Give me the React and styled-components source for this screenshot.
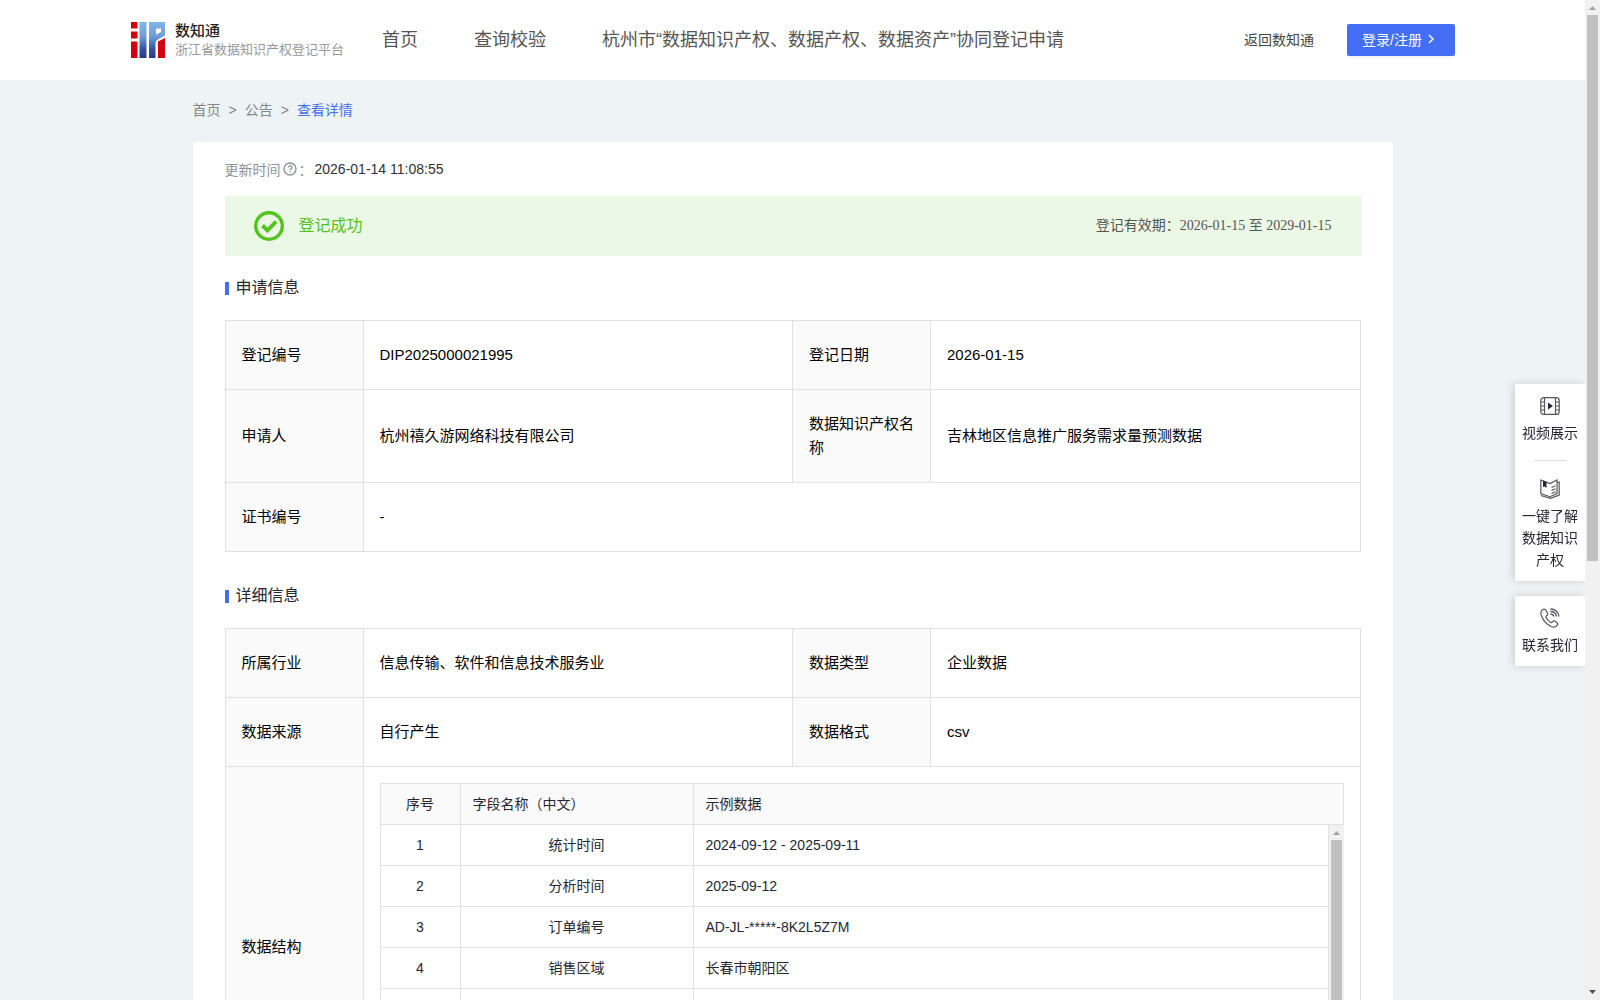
import React from "react";
import styled, { createGlobalStyle } from "styled-components";

const sans = `"Liberation Sans", "Noto Sans CJK SC", sans-serif`;
const serif = `"Liberation Serif", "Noto Sans CJK SC", serif`;

const GlobalStyle = createGlobalStyle`
  * {
    box-sizing: border-box;
  }
  body {
    margin: 0;
    overflow: hidden;
    background: #eef3f6;
    color: #262632;
    font-family: ${sans};
    font-size: 14px;
  }
  a {
    color: inherit;
    text-decoration: none;
  }
  button {
    font-family: inherit;
    cursor: pointer;
  }
`;

const navLinks = ["首页", "查询校验", "杭州市“数据知识产权、数据产权、数据资产”协同登记申请"];

const fields = [
  ["统计时间", "2024-09-12 - 2025-09-11"],
  ["分析时间", "2025-09-12"],
  ["订单编号", "AD-JL-*****-8K2L5Z7M"],
  ["销售区域", "长春市朝阳区"],
  ["", ""],
  ["", ""],
  ["", ""],
];

const Logo = () => (
  <svg width="34" height="36" viewBox="0 0 34 36" aria-hidden="true">
    <defs>
      <linearGradient id="blue" x1="0" y1="0" x2="0" y2="36" gradientUnits="userSpaceOnUse">
        <stop offset="0" stopColor="#7fb6ea" />
        <stop offset="0.4" stopColor="#6f9fd8" />
        <stop offset="0.75" stopColor="#3552a0" />
        <stop offset="1" stopColor="#283a86" />
      </linearGradient>
    </defs>
    <path fill="#d7000f" d="M0 0h6.500v6.500H0zM0 9.500h6.500v7H0zM0 19.500h6.500V36H0zM27 19.500l7-3.500v20h-7z" />
    <path fill="url(#blue)" d="M8.500 0h7v36h-7zM18 0h16v13.500l-8 4.500-1.500 2V36H18zM25 6.500v6l5-2.500V6.500z" fillRule="evenodd" />
  </svg>
);

const CheckIcon = () => (
  <svg width="30" height="30" viewBox="0 0 30 30" fill="none" stroke="#52c41a" aria-hidden="true">
    <circle cx="15" cy="15" r="13.300" strokeWidth="3.400" />
    <path d="M8.500 14.500l5 5 8.500-9" strokeWidth="4" />
  </svg>
);

const HelpIcon = () => (
  <svg width="14" height="14" viewBox="0 0 14 14" fill="none" stroke="#909399" aria-hidden="true">
    <circle cx="7" cy="7" r="6" strokeWidth="1.400" />
    <path d="M5.200 5.600c0-2.400 3.700-2.400 3.700-.2 0 1.300-1.900 1.400-1.900 2.900M7 9.300v1.200" strokeWidth="1.300" />
  </svg>
);

const VideoIcon = () => (
  <svg width="20" height="20" viewBox="0 0 20 20" fill="none" stroke="#55555f" strokeWidth="1.200" aria-hidden="true">
    <rect x="0.800" y="1.600" width="18.400" height="16.800" rx="3" />
    <path d="M4.500 1.600v16.800M15.500 1.600v16.800M.6 6h3.900M.6 10h3.900M.6 14h3.900M15.500 6h3.900M15.500 10h3.900M15.500 14h3.900" />
    <path d="M8 6.500l5 3.500-5 3.500z" fill="#262632" stroke="none" />
  </svg>
);

const BookIcon = () => (
  <svg width="20" height="20" viewBox="0 0 20 20" fill="none" stroke="#55555f" strokeWidth="1.200" aria-hidden="true">
    <path d="M.8 1l9.200 3.500L17 1v13.500l-7 3.200L.8 14.500zM17 3.500l2.200-.5v13L10.500 19.400 .8 16.500" />
    <path d="M11.500 8.500l4-1.700M11.500 11.500l4-1.700M11.500 14.500l4-1.700" />
    <path d="M3 1.500l3.500 1.400v6L4.700 7.500 3 8z" fill="#262632" stroke="none" />
  </svg>
);

const PhoneIcon = () => (
  <svg width="20" height="20" viewBox="0 0 20 20" fill="none" stroke="#55555f" strokeWidth="1.200" aria-hidden="true">
    <path d="M2.800 1.600C.6 3 .5 5.800 1.700 8.600c1.700 4.200 5 7.800 9.300 9.900 2.400 1.100 5 .8 6.500-1.700.6-1 .2-1.500-.5-2.100l-2.200-1.600c-.8-.5-1.400-.4-2 .2l-1 1c-.5.5-1 .4-1.600 0-1.700-1.200-3.300-3-4.200-4.800-.3-.6-.2-1 .3-1.500l.9-.8c.7-.7.7-1.300.3-2L5.800 2.200c-.8-1-1.900-1.300-3-.6z" />
    <path d="M10.500 1c4.500 0 8 3 8.500 7.500M10.500 3.500c3.200 0 5.500 2 6 5M10.500 6c2 0 3 1 3.500 2.500" strokeWidth="1.300" />
  </svg>
);

const ScrollTrack = ({ down }) => (
  <Track aria-hidden="true">
    <Arrow viewBox="0 0 15 15">
      <path d="M4 10h7L7.500 6z" fill="#a3a3a3" />
    </Arrow>
    <Thumb $long={!down} />
    {down && (
      <Arrow viewBox="0 0 15 15">
        <path d="M4 5h7L7.500 9z" fill="#505050" />
      </Arrow>
    )}
  </Track>
);

const App = () => {
  return (
    <Shell>
      <GlobalStyle />
      <Page>
        <Header>
          <Brand href="#">
            <Logo />
            <BrandText>
              <strong>数知通</strong>
              <span>浙江省数据知识产权登记平台</span>
            </BrandText>
          </Brand>
          <Nav>
            {navLinks.map((item) => (
              <a href="#" key={item}>
                {item}
              </a>
            ))}
          </Nav>
          <BackLink href="#">返回数知通</BackLink>
          <LoginButton type="button">
            登录/注册
            <svg width="6" height="10" viewBox="0 0 6 10" fill="none" stroke="#fff" strokeWidth="1.500">
              <path d="M1 1l4 4-4 4" />
            </svg>
          </LoginButton>
        </Header>
        <Main>
          <Breadcrumb>
            <a href="#">首页</a>
            <span>&gt;</span>
            <a href="#">公告</a>
            <span>&gt;</span>
            <Current href="#">查看详情</Current>
          </Breadcrumb>
          <Card>
            <UpdateTime>
              更新时间
              <HelpIcon />：<time>2026-01-14 11:08:55</time>
            </UpdateTime>
            <Banner>
              <CheckIcon />
              <Status>登记成功</Status>
              <Validity>登记有效期：2026-01-15 至 2029-01-15</Validity>
            </Banner>

            <SectionTitle>申请信息</SectionTitle>
            <InfoTable>
              <Columns />
              <tbody>
                <tr>
                  <th>登记编号</th>
                  <td>DIP2025000021995</td>
                  <th>登记日期</th>
                  <td>2026-01-15</td>
                </tr>
                <tr>
                  <th>申请人</th>
                  <td>杭州禧久游网络科技有限公司</td>
                  <th>数据知识产权名称</th>
                  <td>吉林地区信息推广服务需求量预测数据</td>
                </tr>
                <tr>
                  <th>证书编号</th>
                  <td colSpan={3}>-</td>
                </tr>
              </tbody>
            </InfoTable>

            <SectionTitle>详细信息</SectionTitle>
            <InfoTable>
              <Columns />
              <tbody>
                <tr>
                  <th>所属行业</th>
                  <td>信息传输、软件和信息技术服务业</td>
                  <th>数据类型</th>
                  <td>企业数据</td>
                </tr>
                <tr>
                  <th>数据来源</th>
                  <td>自行产生</td>
                  <th>数据格式</th>
                  <td>csv</td>
                </tr>
                <tr>
                  <th>数据结构</th>
                  <StructureCell colSpan={3}>
                    <FieldTable $head>
                      <FieldColumns />
                      <thead>
                        <tr>
                          <th>序号</th>
                          <th>字段名称（中文）</th>
                          <th>示例数据</th>
                        </tr>
                      </thead>
                    </FieldTable>
                    <FieldBody>
                      <FieldTable>
                        <FieldColumns />
                        <tbody>
                          {fields.map(([name, sample], i) => (
                            <tr key={i}>
                              <td>{name && i + 1}</td>
                              <td>{name}</td>
                              <td>{sample}</td>
                            </tr>
                          ))}
                        </tbody>
                      </FieldTable>
                      <ScrollTrack />
                    </FieldBody>
                  </StructureCell>
                </tr>
              </tbody>
            </InfoTable>
          </Card>
        </Main>
      </Page>
      <ScrollTrack down />
      <SideBar>
        <SidePanel>
          <SideLink href="#">
            <VideoIcon />
            视频展示
          </SideLink>
          <SideDivider />
          <SideLink href="#">
            <BookIcon />
            一键了解数据知识产权
          </SideLink>
        </SidePanel>
        <SidePanel>
          <SideLink href="#">
            <PhoneIcon />
            联系我们
          </SideLink>
        </SidePanel>
      </SideBar>
    </Shell>
  );
};

const Columns = () => (
  <colgroup>
    <LabelCol />
    <col />
    <LabelCol />
    <col />
  </colgroup>
);

const FieldColumns = () => (
  <colgroup>
    <IndexCol />
    <NameCol />
    <col />
  </colgroup>
);

export default App;

const Shell = styled.div`
  display: grid;
  grid-template-columns: minmax(0, 1fr) 15px;
  height: 100vh;
`;

const Page = styled.div`
  min-height: 0;
  overflow-y: auto;
  scrollbar-width: none;
`;

const Header = styled.header`
  display: flex;
  align-items: center;
  height: 80px;
  padding: 0 130px 0 131px;
  background: #fff;
`;

const Brand = styled.a`
  display: flex;
  align-items: center;
  gap: 10px;
`;

const BrandText = styled.span`
  display: flex;
  flex-direction: column;

  strong {
    color: #222;
    font-size: 15px;
    font-weight: 500;
    line-height: 20px;
  }
  span {
    color: #999;
    font-size: 13px;
    line-height: 18px;
  }
`;

const Nav = styled.nav`
  display: flex;
  gap: 56px;
  margin-left: 38px;
  color: #555;
  font-size: 18px;
  line-height: 24px;
  white-space: nowrap;
`;

const BackLink = styled.a`
  margin-left: auto;
  color: #444;
  line-height: 24px;
  white-space: nowrap;
`;

const LoginButton = styled.button`
  display: flex;
  align-items: center;
  gap: 6px;
  height: 32px;
  margin-left: 33px;
  padding: 0 21px 2px 15px;
  border: 0;
  border-radius: 2px;
  background: #446ef5;
  box-shadow: 0 2px 0 rgba(0, 0, 0, 0.04);
  color: #fff;
  font-size: 14px;
  white-space: nowrap;
`;

const Main = styled.main`
  max-width: 1200px;
  margin: 0 auto;
`;

const Breadcrumb = styled.nav`
  display: flex;
  gap: 8px;
  padding: 19px 0 21px;
  color: #85878a;
  line-height: 22px;
`;

const Current = styled.a`
  color: #446ef5;
`;

const Card = styled.section`
  padding: 16px 32px;
  border-radius: 4px;
  background: #fff;
`;

const UpdateTime = styled.div`
  display: flex;
  align-items: center;
  height: 22px;
  margin-bottom: 16px;
  color: #909399;

  svg {
    margin: 0 2px;
  }
  time {
    margin-left: 2px;
    color: #303133;
  }
`;

const Banner = styled.div`
  display: flex;
  align-items: center;
  height: 60px;
  padding: 0 29px;
  background: #ebf8e6;

  span {
    padding-bottom: 4px;
  }
`;

const Status = styled.span`
  margin-left: 15px;
  color: #52c41a;
  font-size: 16px;
`;

const Validity = styled.span`
  margin-left: auto;
  color: #555;
  font-family: ${serif};
`;

const SectionTitle = styled.h2`
  display: flex;
  align-items: center;
  gap: 7px;
  margin: 20px 0;
  font-size: 16px;
  font-weight: 400;
  line-height: 24px;

  &::before {
    content: "";
    width: 4px;
    height: 13px;
    background: #446ef5;
  }
  table + & {
    margin-top: 32px;
  }
`;

const InfoTable = styled.table`
  width: 100%;
  border-collapse: collapse;
  table-layout: fixed;
  color: #000;
  font-size: 15px;
  line-height: 24px;

  th,
  td {
    padding: 22px 16px;
    border: 1px solid #e1e1e1;
    font-weight: 400;
    text-align: left;
  }
  th {
    background: #fafafa;
  }
`;

const LabelCol = styled.col`
  width: 138px;
`;

const IndexCol = styled.col`
  width: 80px;
`;

const NameCol = styled.col`
  width: 233px;
`;

const StructureCell = styled.td`
  && {
    padding: 16px;
  }
`;

const FieldTable = styled.table`
  width: 100%;
  border-collapse: separate;
  border-spacing: 0;
  table-layout: fixed;
  border-left: 1px solid #e1e1e1;
  border-top: ${(props) => (props.$head ? "1px solid #e1e1e1" : "0")};
  color: #262632;
  font-size: 14px;
  line-height: 24px;

  && th,
  && td {
    height: 41px;
    padding: 8px 12px;
    border: solid #e1e1e1;
    border-width: 0 1px 1px 0;
  }
  && th:first-child,
  && td:first-child,
  && td:nth-child(2) {
    text-align: center;
  }
`;

const FieldBody = styled.div`
  display: grid;
  grid-template-columns: minmax(0, 1fr) 15px;
  height: 286px;
  overflow: hidden;
`;

const Track = styled.div`
  display: flex;
  flex-direction: column;
  min-height: 0;
  background: #f1f1f1;
`;

const Arrow = styled.svg`
  width: 15px;
  height: 15px;
  flex: none;

  &:last-child {
    margin-top: auto;
  }
`;

const Thumb = styled.div`
  height: ${(props) => (props.$long ? "80%" : "calc(56.3% - 17px)")};
  margin: 0 2px;
  background: #c1c1c1;
`;

const SideBar = styled.aside`
  position: fixed;
  top: 384px;
  right: 15px;
  display: grid;
  gap: 15px;
  width: 70px;
`;

const SidePanel = styled.div`
  padding: 12px 6px 10px;
  background: #fff;
  box-shadow: -2px 0 8px rgba(0, 0, 0, 0.15);
  clip-path: inset(-10px 0 -10px -10px);
`;

const SideLink = styled.a`
  display: flex;
  flex-direction: column;
  align-items: center;
  gap: 6px;
  line-height: 22px;
  text-align: center;
`;

const SideDivider = styled.hr`
  width: 32px;
  height: 1px;
  margin: 16px auto 18px;
  border: 0;
  background: #ddd;
`;
